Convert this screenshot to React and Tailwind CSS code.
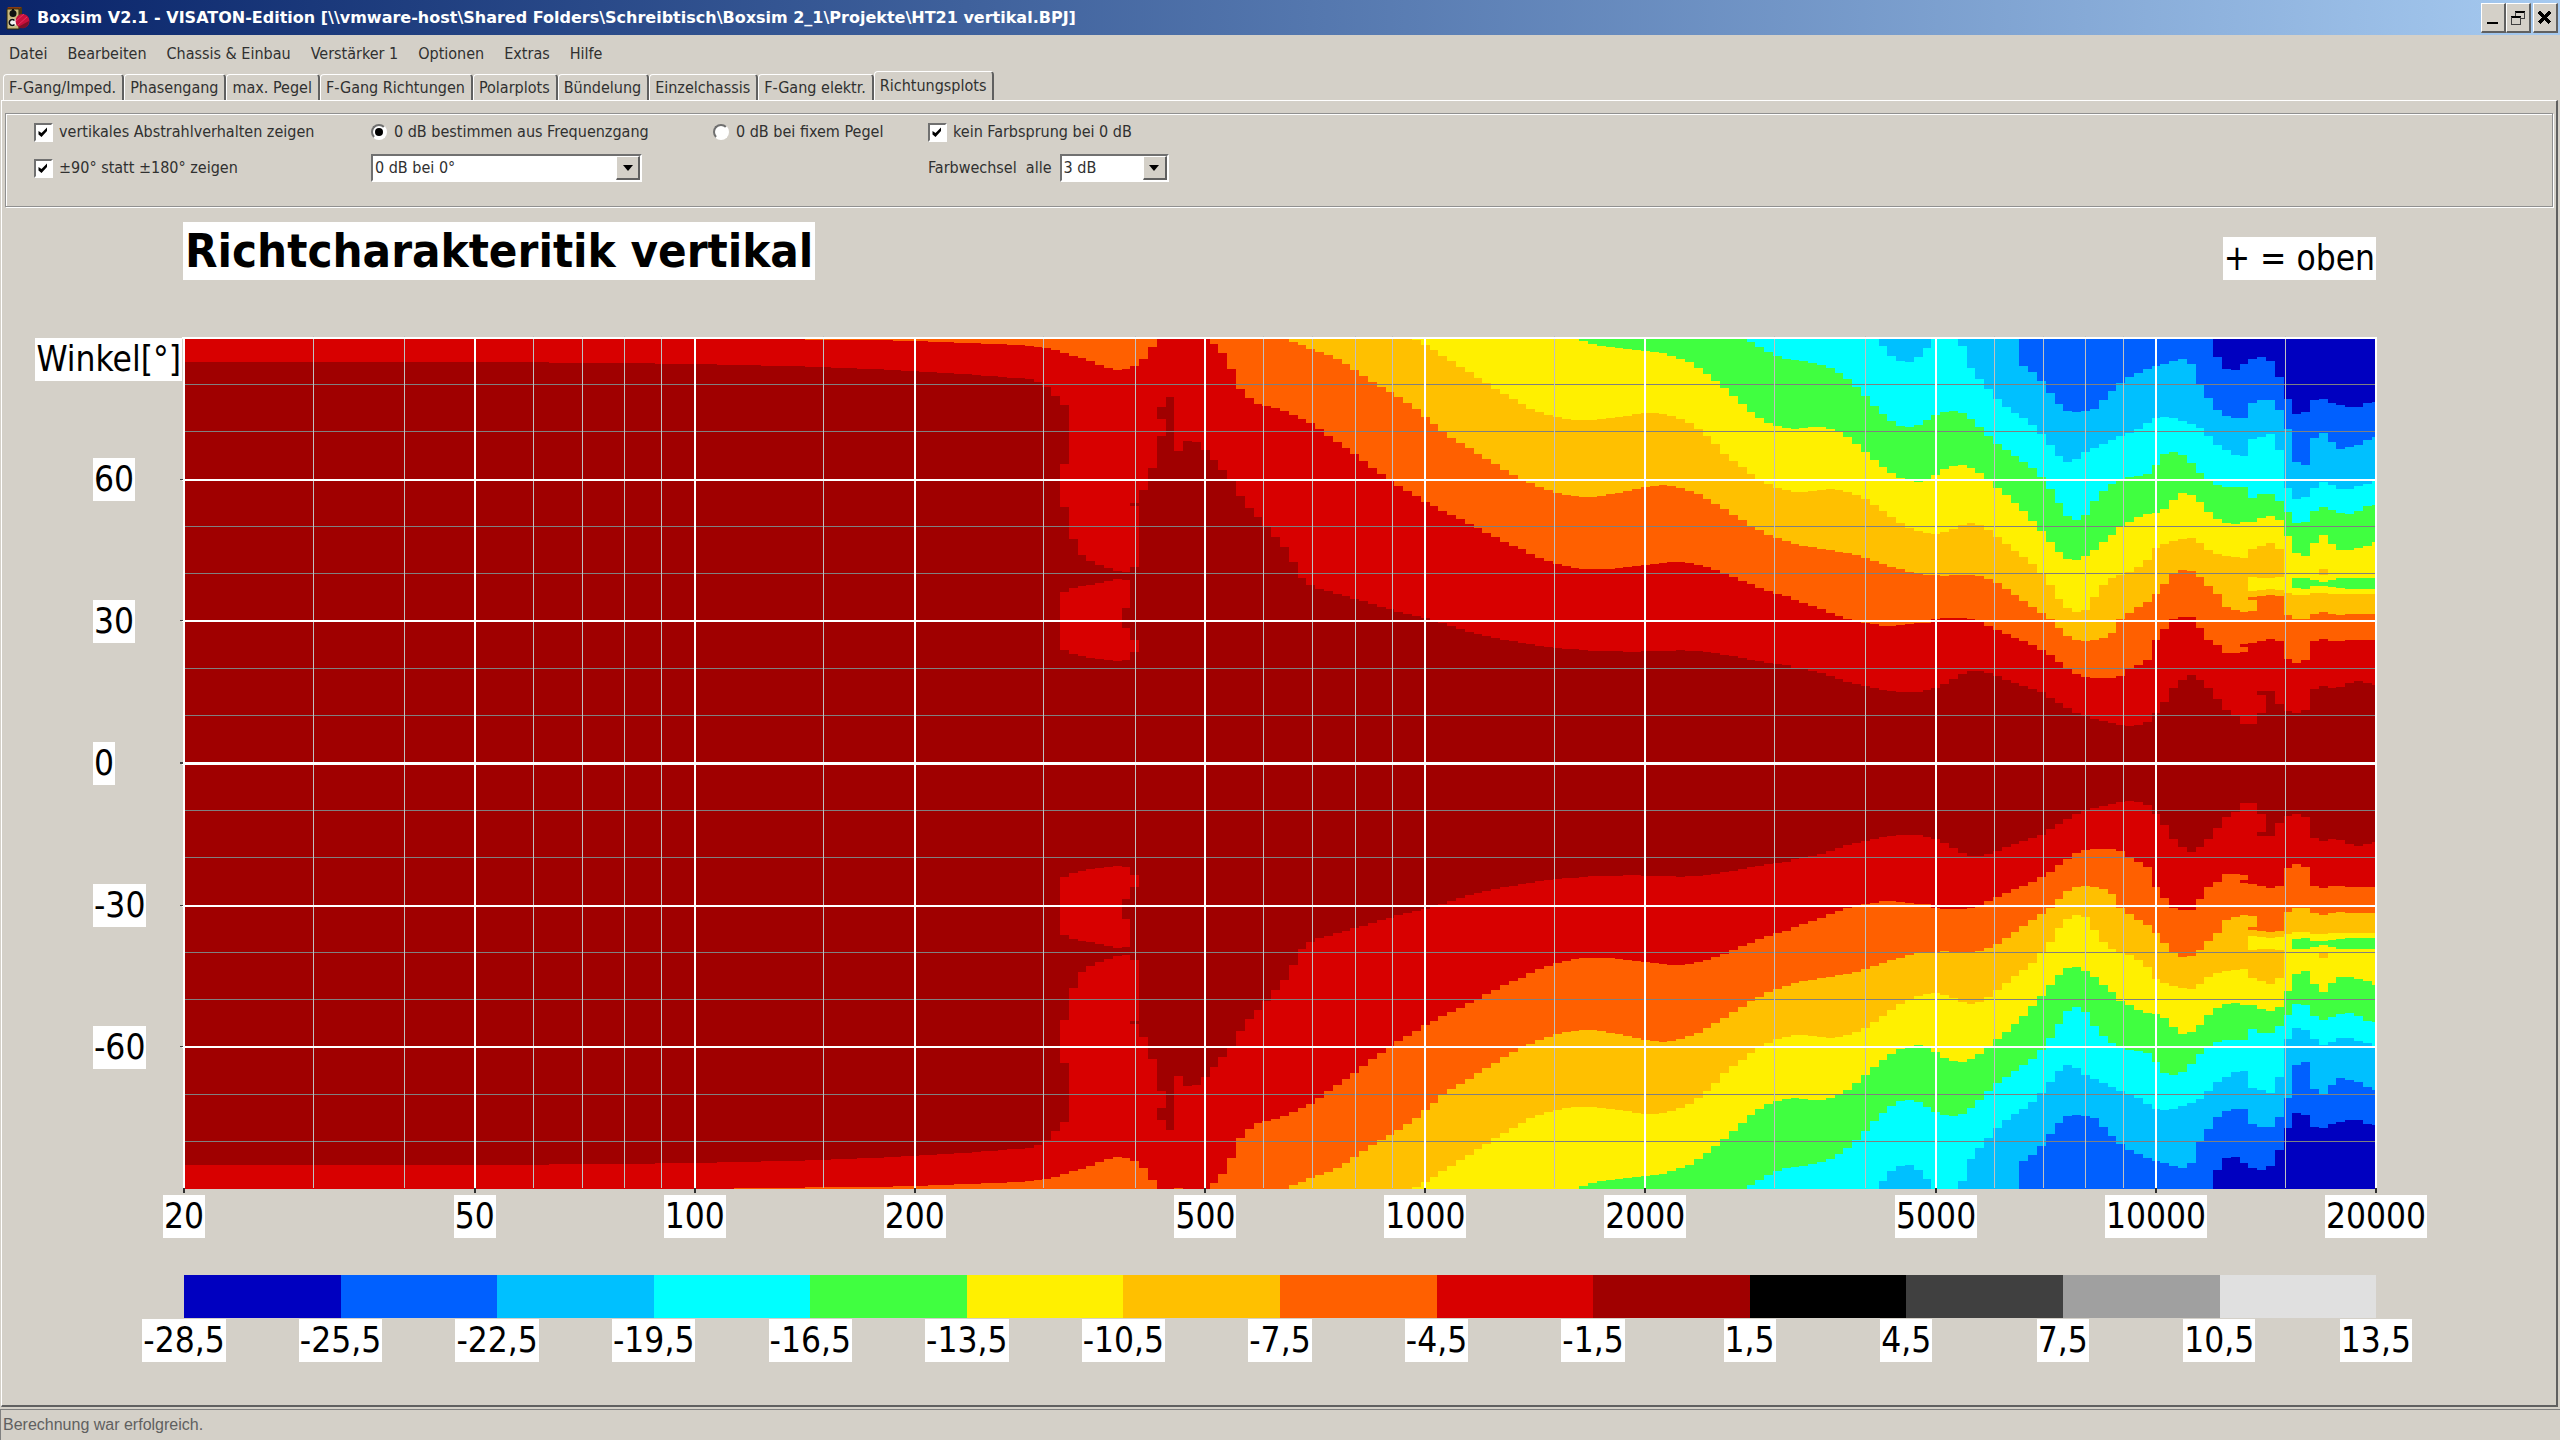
import React from "react";

const menus = [
    "Datei",
    "Bearbeiten",
    "Chassis & Einbau",
    "Verstärker 1",
    "Optionen",
    "Extras",
    "Hilfe",
];

const tabs = [
    "F-Gang/Imped.",
    "Phasengang",
    "max. Pegel",
    "F-Gang Richtungen",
    "Polarplots",
    "Bündelung",
    "Einzelchassis",
    "F-Gang elektr.",
    "Richtungsplots",
];

const frequencies = [20, 50, 100, 200, 500, 1000, 2000, 5000, 10000, 20000];
const minorFrequencies = [
    30, 40, 60, 70, 80, 90, 150, 300, 400, 600, 700, 800, 900, 1500, 3000, 4000,
    6000, 7000, 8000, 9000, 15000,
];
const angles = ["60", "30", "0", "-30", "-60"];

const legendColors = [
    "#0000c0",
    "#0060ff",
    "#00c0ff",
    "#00ffff",
    "#40ff40",
    "#fff000",
    "#ffc000",
    "#ff6000",
    "#d80000",
    "#a00000",
    "#000000",
    "#404040",
    "#a0a0a0",
    "#e0e0e0",
];
const legendLabels = [
    "-28,5",
    "-25,5",
    "-22,5",
    "-19,5",
    "-16,5",
    "-13,5",
    "-10,5",
    "-7,5",
    "-4,5",
    "-1,5",
    "1,5",
    "4,5",
    "7,5",
    "10,5",
    "13,5",
];

const W = 2192;
const H = 850;
const COLUMNS = 250;

// Depth of every level below the +90° edge, one value per frequency column.
// The plot is symmetric, so the same depths are used above the -90° edge.
const levels = [
    {
        color: "#d80000",
        start: 0,
        depths: [
            24, 24, 24, 24, 24, 24, 24, 24, 24, 24, 24, 24, 24, 24, 24, 24, 24,
            24, 24, 24, 24, 24, 24, 24, 24, 24, 24, 24, 24, 24, 24, 24, 24, 24,
            24, 24, 24, 24, 24, 24, 24, 24, 25, 25, 25, 25, 25, 25, 25, 25, 25,
            25, 25, 25, 26, 26, 26, 26, 26, 26, 26, 27, 27, 27, 27, 27, 28, 28,
            28, 28, 28, 29, 29, 29, 30, 30, 30, 31, 31, 31, 32, 32, 33, 33, 34,
            34, 35, 35, 36, 36, 37, 38, 38, 39, 40, 40, 41, 44, 49, 58, 169,
            201, 217, 223, 227, 230, 233, 234, 229, 152, 130, 98, 59, 113, 103,
            104, 112, 122, 132, 143, 158, 170, 179, 188, 199, 209, 224, 240,
            247, 251, 253, 256, 258, 261, 263, 266, 269, 271, 274, 276, 278,
            280, 283, 285, 288, 291, 294, 296, 298, 300, 302, 303, 305, 306,
            308, 309, 310, 311, 311, 312, 313, 313, 313, 313, 314, 314, 313,
            313, 313, 313, 312, 313, 313, 314, 315, 317, 318, 320, 322, 323,
            325, 326, 327, 330, 331, 333, 335, 338, 341, 344, 346, 348, 350,
            352, 353, 354, 354, 354, 352, 350, 346, 341, 336, 333, 333, 335,
            338, 342, 345, 348, 351, 354, 360, 365, 370, 375, 378, 381, 383,
            385, 387, 388, 387, 384, 375, 364, 350, 342, 337, 342, 350, 361,
            372, 377, 386, 386, 375, 353, 366, 373, 375, 372, 351, 348, 350,
            349, 345, 343, 345, 347,
        ],
    },
    {
        color: "#ff6000",
        start: 63,
        depths: [
            1, 1, 1, 1, 1, 1, 1, 1, 2, 2, 2, 2, 2, 2, 2, 2, 2, 2, 3, 3, 3, 3, 4,
            4, 4, 5, 5, 5, 6, 6, 6, 7, 7, 8, 9, 10, 12, 15, 18, 20, 23, 27, 30,
            32, 31, 28, 21, 9, 0, 0, 1, 0, 0, 0, 6, 15, 31, 51, 60, 66, 68, 70,
            73, 77, 81, 85, 91, 98, 104, 110, 116, 123, 130, 136, 142, 148, 153,
            158, 164, 168, 173, 177, 181, 186, 190, 195, 199, 204, 208, 211,
            216, 220, 223, 226, 228, 230, 231, 231, 231, 231, 230, 229, 228,
            227, 226, 225, 224, 224, 225, 227, 229, 232, 235, 239, 243, 246,
            250, 253, 256, 258, 262, 265, 268, 271, 275, 278, 281, 283, 285,
            286, 288, 288, 287, 286, 285, 285, 281, 280, 280, 280, 281, 284,
            288, 292, 296, 300, 303, 307, 312, 317, 324, 330, 336, 339, 340,
            340, 340, 338, 331, 327, 322, 302, 291, 281, 279, 279, 290, 302,
            307, 315, 315, 314, 305, 303, 301, 303, 321, 325, 322, 303, 301,
            303, 303, 302, 302, 302, 302,
        ],
    },
    {
        color: "#ffc000",
        start: 126,
        depths: [
            4, 7, 11, 14, 17, 21, 26, 32, 38, 44, 49, 54, 59, 65, 71, 79, 86,
            94, 100, 105, 110, 116, 121, 126, 132, 137, 141, 145, 149, 152, 155,
            157, 158, 159, 159, 158, 156, 155, 153, 151, 149, 148, 147, 148,
            150, 153, 156, 161, 166, 171, 177, 182, 188, 192, 197, 200, 203,
            206, 208, 209, 211, 212, 214, 215, 217, 220, 223, 226, 229, 231,
            234, 236, 237, 237, 238, 237, 237, 237, 238, 241, 245, 251, 257,
            263, 269, 275, 281, 290, 298, 302, 303, 302, 300, 295, 281, 275,
            269, 264, 256, 246, 236, 232, 233, 239, 248, 256, 269, 272, 274,
            273, 258, 257, 258, 277, 281, 281, 276, 274, 276, 277, 276, 276,
            276, 276,
        ],
    },
    {
        color: "#fff000",
        start: 140,
        depths: [
            2, 7, 12, 18, 23, 29, 34, 40, 45, 51, 56, 61, 66, 71, 74, 77, 79,
            81, 82, 82, 82, 81, 80, 79, 78, 76, 75, 75, 76, 78, 81, 85, 91, 98,
            106, 116, 123, 129, 136, 141, 146, 150, 152, 154, 154, 153, 152,
            151, 152, 154, 157, 161, 167, 173, 179, 185, 190, 193, 195, 196,
            194, 191, 187, 185, 187, 192, 199, 206, 213, 219, 226, 236, 247,
            261, 270, 274, 272, 259, 247, 240, 237, 234, 229, 222, 210, 206,
            203, 201, 200, 205, 212, 216, 218, 219, 220, 211, 208, 205, 211,
            255, 257, 257, 255, 255, 256, 256, 256, 256, 256, 256,
        ],
    },
    {
        color: "#40ff40",
        start: 159,
        depths: [
            3, 6, 8, 9, 10, 11, 12, 13, 14, 15, 18, 21, 24, 30, 36, 43, 50, 58,
            66, 74, 80, 85, 88, 90, 91, 90, 89, 89, 91, 94, 99, 106, 114, 122,
            129, 135, 140, 142, 144, 142, 137, 131, 128, 127, 130, 135, 141,
            150, 157, 165, 173, 183, 193, 204, 214, 221, 222, 218, 212, 204,
            197, 188, 184, 179, 176, 175, 171, 162, 155, 157, 164, 174, 181,
            185, 186, 184, 184, 180, 178, 182, 198, 215, 218, 205, 197, 206,
            212, 212, 210, 208, 204,
        ],
    },
    {
        color: "#00ffff",
        start: 178,
        depths: [
            4, 9, 14, 18, 21, 22, 23, 25, 27, 30, 35, 41, 49, 58, 68, 76, 83,
            88, 89, 87, 82, 77, 74, 73, 75, 81, 89, 98, 106, 112, 118, 124, 130,
            139, 151, 165, 178, 182, 177, 163, 153, 146, 141, 139, 138, 136,
            127, 116, 114, 117, 125, 135, 143, 147, 149, 149, 149, 160, 156,
            156, 163, 174, 185, 184, 173, 169, 172, 175, 176, 173, 168, 167,
        ],
    },
    {
        color: "#00c0ff",
        start: 193,
        depths: [
            8, 18, 23, 24, 19, 10, 0, 0, 0, 8, 30, 41, 51, 61, 69, 75, 80, 87,
            96, 107, 118, 124, 121, 114, 110, 106, 102, 98, 95, 91, 85, 80, 79,
            80, 83, 86, 90, 98, 107, 112, 117, 118, 101, 99, 96, 112, 150, 161,
            159, 150, 144, 147, 151, 151, 148, 146, 143,
        ],
    },
    {
        color: "#0060ff",
        start: 209,
        depths: [
            28, 34, 43, 55, 66, 73, 74, 73, 71, 62, 53, 45, 39, 35, 31, 28, 26,
            23, 21, 26, 47, 60, 72, 78, 80, 80, 65, 62, 62, 72, 91, 124, 127,
            100, 95, 104, 111, 109, 107, 102, 99,
        ],
    },
    {
        color: "#0000c0",
        start: 231,
        depths: [
            19, 31, 32, 26, 21, 19, 23, 39, 61, 76, 74, 62, 61, 65, 67, 69, 69,
            65, 64,
        ],
    },
];

// Detached areas: [column, from, to]
const islands = [
    {
        color: "#a00000",
        cells: [
            [100, 67, 126],
            [108, 165, 168],
            [111, 69, 81],
            [236, 353, 357],
        ],
    },
    {
        color: "#d80000",
        cells: [
            [100, 254, 312],
            [101, 250, 316],
            [102, 248, 318],
            [103, 247, 320],
            [104, 245, 321],
            [105, 243, 322],
            [106, 241, 323],
            [107, 242, 270],
            [107, 290, 322],
            [108, 302, 314],
            [234, 306, 309],
        ],
    },
    { color: "#ff6000", cells: [[235, 259, 262]] },
    {
        color: "#fff000",
        cells: [
            [235, 239, 253],
            [236, 240, 252],
            [237, 240, 251],
            [238, 239, 252],
        ],
    },
    { color: "#ffc000", cells: [[243, 231, 237]] },
    {
        color: "#40ff40",
        cells: [
            [240, 240, 250],
            [241, 240, 251],
            [242, 242, 248],
            [243, 244, 248],
            [244, 242, 249],
            [245, 240, 250],
            [246, 240, 251],
            [247, 240, 251],
            [248, 240, 251],
            [249, 240, 251],
        ],
    },
];

const columnEdge = (k) =>
    Math.round(Math.min(W, Math.max(0, ((k - 0.5) * W) / (COLUMNS - 1))));

const freqX = (f) => Math.round((W * Math.log10(f / 20)) / 3);

const levelPath = ({ start, depths }) => {
    const side = (edge, y) =>
        `M${columnEdge(start)} ${edge}` +
        depths.map((d, i) => `V${y(d)}H${columnEdge(start + i + 1)}`).join("") +
        `V${edge}Z`;
    return side(0, (d) => d) + side(H, (d) => H - d);
};

const islandPath = (cells) =>
    cells
        .map(([k, from, to]) => {
            const a = columnEdge(k);
            const b = columnEdge(k + 1);
            return `M${a} ${from}H${b}V${to}H${a}ZM${a} ${H - from}H${b}V${H - to}H${a}Z`;
        })
        .join("");

const raised =
    "border-t border-l border-r-2 border-b-2 border-t-white border-l-white border-r-[#606060] border-b-[#606060] bg-[#d4d0c8]";
const sunken =
    "border-2 border-t-[#707070] border-l-[#707070] border-r-white border-b-white bg-white";

const AppIcon = () => (
    <svg viewBox="0 0 24 24" className="h-6 w-6">
        <path d="M2 1h14l-2 2H1z" fill="#8a3a10" />
        <path d="M1 3h12v20H1z" fill="#c8b87c" stroke="#302808" />
        <path d="M13 3l3-2v19l-3 3z" fill="#4a3a10" />
        <circle cx="7" cy="7.500" r="3.500" fill="#101010" />
        <path d="M6 3h2v3H6z" fill="#101010" />
        <circle cx="6.500" cy="16.500" r="4" fill="#f4f4f4" />
        <path
            d="M8.500 14.500a3 3 0 1 0 0 4"
            fill="none"
            stroke="#101010"
            strokeWidth="1.600"
        />
        <circle cx="16.500" cy="15" r="7" fill="#c8103c" />
        <path d="M23 15a7 7 0 0 1-11 6z" fill="#7c1028" />
        <path d="M10 15l8-7M12 19l9-8" stroke="#e83060" strokeWidth="1" />
    </svg>
);

const WindowButton = ({ label, children }) => (
    <button
        aria-label={label}
        className={`flex h-[30px] w-[25px] items-center justify-center ${raised}`}
    >
        <svg
            viewBox="0 0 16 20"
            className="h-5 w-4"
            shapeRendering="crispEdges"
        >
            {children}
        </svg>
    </button>
);

const CheckBox = ({ label }) => (
    <label className="flex h-6 items-center gap-[6px]">
        <span className="grid">
            <input
                type="checkbox"
                defaultChecked
                className={`peer col-start-1 row-start-1 h-[19px] w-[19px] appearance-none ${sunken}`}
            />
            <svg
                viewBox="0 0 19 19"
                className="pointer-events-none invisible col-start-1 row-start-1 h-[19px] w-[19px] peer-checked:visible"
            >
                <path
                    d="M4.500 8v3.500L7.500 14l5.500-6V4.500L7.500 10z"
                    fill="#000"
                />
            </svg>
        </span>
        {label}
    </label>
);

const Radio = ({ label, checked }) => (
    <label className="flex h-6 items-center gap-[7px]">
        <span className="grid">
            <input
                type="radio"
                name="reference"
                defaultChecked={checked}
                className={`peer col-start-1 row-start-1 h-4 w-4 appearance-none rounded-full ${sunken}`}
            />
            <svg
                viewBox="0 0 16 16"
                className="pointer-events-none invisible col-start-1 row-start-1 h-4 w-4 peer-checked:visible"
            >
                <circle cx="8" cy="8" r="4" fill="#000" />
            </svg>
        </span>
        {label}
    </label>
);

const DropDown = ({ id, label, value, options, width }) => (
    <span className={`grid h-7 ${width} ${sunken}`}>
        <select
            id={id}
            aria-label={label}
            defaultValue={value}
            className="col-start-1 row-start-1 h-6 w-full appearance-none bg-white pl-[2px] text-[#303030]"
        >
            {options.map((o) => (
                <option key={o}>{o}</option>
            ))}
        </select>
        <span
            className={`pointer-events-none col-start-1 row-start-1 flex h-6 w-6 items-center justify-center justify-self-end ${raised}`}
        >
            <svg viewBox="0 0 10 6" className="h-[6px] w-[10px]">
                <path d="M0 0h10L5 6z" fill="#000" />
            </svg>
        </span>
    </span>
);

const AxisLabel = ({ children }) => (
    <span className="bg-white px-px text-[35px] leading-[43px] whitespace-nowrap text-black">
        {children}
    </span>
);

const Plot = () => (
    <svg
        viewBox={`0 0 ${W} ${H}`}
        preserveAspectRatio="none"
        shapeRendering="crispEdges"
        className="block min-h-0 min-w-0 flex-1 overflow-visible"
    >
        <rect width={W} height={H} fill="#a00000" />
        {levels.map((level) => (
            <path key={level.color} d={levelPath(level)} fill={level.color} />
        ))}
        {islands.map((island) => (
            <path
                key={island.color}
                d={islandPath(island.cells)}
                fill={island.color}
            />
        ))}

        {/* Grid */}
        {[10, 20, 40, 50, 70, 80, 100, 110, 130, 140, 160, 170].map((deg) => (
            <rect
                key={deg}
                y={Math.round((deg * H) / 180) - 1}
                width={W}
                height="1"
                fill="#808080"
            />
        ))}
        {minorFrequencies.map((f) => (
            <rect
                key={f}
                x={freqX(f)}
                y="-2"
                width="1"
                height={H + 1}
                fill="#c0c0c0"
            />
        ))}
        {[0, 30, 60, 90, 120, 150].map((deg) => (
            <rect
                key={deg}
                x="-2"
                y={Math.round((deg * H) / 180) - 1}
                width={W + 2}
                height="2"
                fill="#fff"
            />
        ))}
        {[30, 60, 90, 120, 150].map((deg) => (
            <rect
                key={deg}
                x="-4"
                y={Math.round((deg * H) / 180) - 1}
                width="3"
                height="1"
                fill="#404040"
            />
        ))}
        {frequencies.map((f) => (
            <React.Fragment key={f}>
                <rect
                    x={freqX(f) - 1}
                    y="-1"
                    width="2"
                    height={H}
                    fill="#fff"
                />
                <rect
                    x={freqX(f) - 1}
                    y={H - 1}
                    width="2"
                    height="5"
                    fill="#303030"
                />
            </React.Fragment>
        ))}
    </svg>
);

const App = () => {
    return (
        <div className="flex min-h-screen flex-col bg-[#d4d0c8] font-['DejaVu_Sans_Condensed','DejaVu_Sans',sans-serif] text-[16px] leading-5 text-[#303030]">
            {/* Title bar */}
            <header className="flex h-[35px] items-center gap-[7px] bg-linear-to-r from-[#0a246a] to-[#a6caf0] pr-[2px] pl-[6px]">
                <AppIcon />
                <h1 className="flex-1 font-['DejaVu_Sans',sans-serif] text-[16px] font-bold text-white">
                    Boxsim V2.1 - VISATON-Edition [\\vmware-host\Shared
                    Folders\Schreibtisch\Boxsim 2_1\Projekte\HT21 vertikal.BPJ]
                </h1>
                <div className="flex gap-[2px]">
                    <div className="flex">
                        <WindowButton label="Minimieren">
                            <path d="M2 15h11v2H2z" fill="#000" />
                        </WindowButton>
                        <WindowButton label="Wiederherstellen">
                            <path d="M5 4h10v2H5z" fill="#000" />
                            <path
                                d="M5.500 5v4M14.500 5v6M11 11.500h4"
                                stroke="#404040"
                            />
                            <path d="M1 9h10v2H1z" fill="#000" />
                            <path
                                d="M1.500 10v7.500h9V10"
                                fill="none"
                                stroke="#404040"
                            />
                        </WindowButton>
                    </div>
                    <WindowButton label="Schließen">
                        <path
                            d="M2 5l11 11M13 5L2 16"
                            stroke="#000"
                            strokeWidth="3"
                        />
                    </WindowButton>
                </div>
            </header>

            <nav className="flex h-9 items-center gap-5 pt-px pl-[9px]">
                {menus.map((m) => (
                    <button key={m}>{m}</button>
                ))}
            </nav>

            <div role="tablist" className="flex h-[29px] items-end pl-[3px]">
                {tabs.map((tab, i) => {
                    const active = i === tabs.length - 1;
                    return (
                        <button
                            key={tab}
                            role="tab"
                            aria-selected={active}
                            className={`rounded-t-sm border-t border-r-2 border-l border-t-white border-r-[#606060] border-l-white pr-[6px] pl-[5px] whitespace-nowrap ${active ? "h-[29px]" : "h-[26px] pt-px"}`}
                        >
                            {tab}
                        </button>
                    );
                })}
            </div>

            <main className="mr-[2px] ml-px flex flex-1 flex-col border-t border-r-2 border-b-2 border-l border-t-white border-r-[#606060] border-b-[#606060] border-l-white">
                {/* Settings */}
                <div className="mx-[3px] mt-3 border border-[#909090] p-px shadow-[inset_1px_1px_#fff,1px_1px_#fff]">
                    <div className="grid grid-cols-[337px_342px_215px_1fr] items-center gap-y-[10px] pt-[5px] pb-[23px] pl-[27px]">
                        <CheckBox label="vertikales Abstrahlverhalten zeigen" />
                        <Radio
                            label="0 dB bestimmen aus Frequenzgang"
                            checked
                        />
                        <Radio label="0 dB bei fixem Pegel" />
                        <CheckBox label="kein Farbsprung bei 0 dB" />
                        <CheckBox label="±90° statt ±180° zeigen" />
                        <DropDown
                            id="zero"
                            label="Bezug"
                            value="0 dB bei 0°"
                            options={["0 dB bei 0°", "0 dB bei 30°"]}
                            width="w-[271px]"
                        />
                        <div className="col-start-4 flex items-center gap-2">
                            <label htmlFor="step" className="whitespace-pre">
                                Farbwechsel{"  "}alle
                            </label>
                            <DropDown
                                id="step"
                                value="3 dB"
                                options={["1 dB", "3 dB", "6 dB"]}
                                width="w-[109px]"
                            />
                        </div>
                    </div>
                </div>

                {/* Diagram */}
                <section className="flex flex-1 flex-col pt-[15px] pb-[43px]">
                    <div className="flex items-end justify-between pr-[180px] pl-[181px]">
                        <h2 className="bg-white px-[2px] text-[47px] leading-[58px] font-bold text-black">
                            Richtcharakteritik vertikal
                        </h2>
                        <AxisLabel>+ = oben</AxisLabel>
                    </div>

                    <div className="mt-[58px] flex flex-1">
                        <div className="flex w-[182px] shrink-0 flex-col justify-between">
                            <div className="flex h-0 items-start justify-end pr-[2px]">
                                <AxisLabel>Winkel[°]</AxisLabel>
                            </div>
                            {angles.map((a) => (
                                <div
                                    key={a}
                                    className="flex h-0 items-center pl-[91px]"
                                >
                                    <AxisLabel>{a}</AxisLabel>
                                </div>
                            ))}
                            <div className="h-0" />
                        </div>
                        <Plot />
                        <div className="w-[180px] shrink-0" />
                    </div>

                    <div className="mr-[180px] ml-[182px] flex pt-[6px]">
                        {frequencies.map((f, i) => (
                            <div
                                key={f}
                                className="flex basis-0 justify-end"
                                style={{
                                    flexGrow: i
                                        ? Math.log10(f / frequencies[i - 1])
                                        : 0,
                                }}
                            >
                                <div className="flex w-0 justify-center">
                                    <AxisLabel>{f}</AxisLabel>
                                </div>
                            </div>
                        ))}
                    </div>

                    {/* Legend */}
                    <div className="mt-[37px] mr-[180px] ml-[182px]">
                        <div className="flex h-[43px]">
                            {legendColors.map((c) => (
                                <div
                                    key={c}
                                    className="flex-1"
                                    style={{ backgroundColor: c }}
                                />
                            ))}
                        </div>
                        <div className="mt-px flex justify-between">
                            {legendLabels.map((l) => (
                                <div
                                    key={l}
                                    className="flex w-0 justify-center"
                                >
                                    <AxisLabel>{l}</AxisLabel>
                                </div>
                            ))}
                        </div>
                    </div>
                </section>
            </main>

            <footer className="mt-[2px] flex h-[31px] items-center border-t border-l border-[#808080] pl-[2px] font-['Liberation_Sans',sans-serif] text-[16px] text-[#606060]">
                Berechnung war erfolgreich.
            </footer>
        </div>
    );
};

export default App;
